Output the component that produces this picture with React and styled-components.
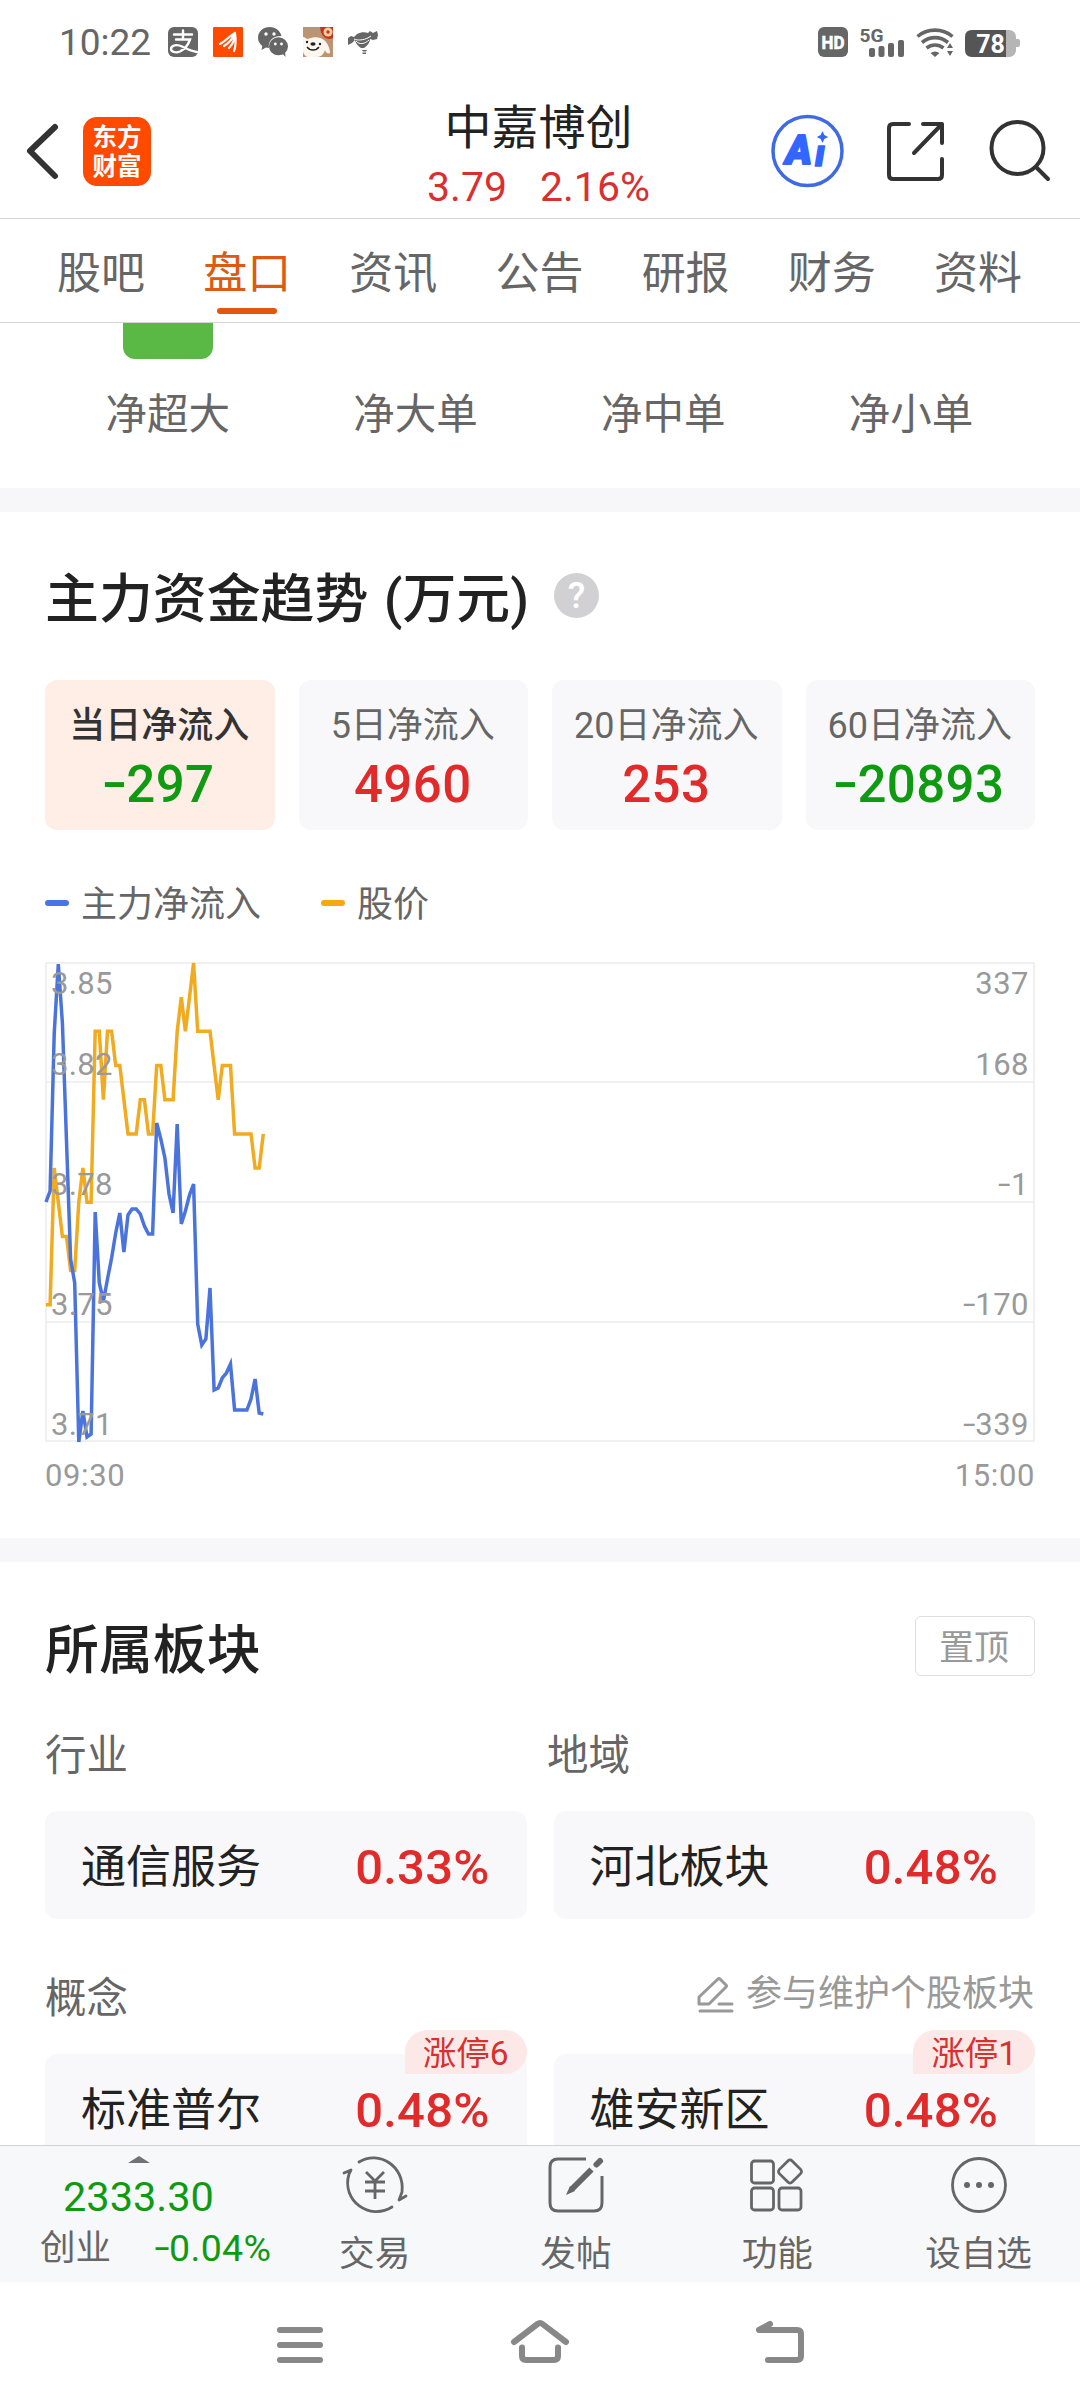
import styled, { createGlobalStyle } from 'styled-components';

const GlobalStyle = createGlobalStyle`
  * {
    box-sizing: border-box;
  }
  body {
    margin: 0;
    background: #fff;
    font-family: Roboto, 'Noto Sans CJK SC', sans-serif;
    line-height: 1;
    color: #222;
  }
  svg {
    display: block;
    flex-shrink: 0;
    overflow: visible;
  }
`;

const RED = '#e12a2a';
const GREEN = '#0f9a12';

const Screen = styled.div`
  display: flex;
  flex-direction: column;
  width: 1080px;
  height: 2408px;
  overflow: hidden;
`;

/* status bar */
const StatusBar = styled.div`
  display: flex;
  align-items: center;
  justify-content: space-between;
  height: 84px;
  padding: 0 60px 0 59px;
  color: #666;
`;
const StatusGroup = styled.div`
  display: flex;
  align-items: center;
  gap: ${props => props.$gap}px;
`;
const Clock = styled.span`
  width: 94px;
  font-size: 37px;
`;

/* header */
const Header = styled.header`
  display: grid;
  grid-template-columns: 1fr auto 1fr;
  align-items: center;
  height: 135px;
  padding: 0 28px 0 25px;
  border-bottom: 1px solid #d4d4d4;
`;
const HeaderSide = styled.div`
  display: flex;
  align-items: center;
  justify-content: ${props => (props.$right ? 'flex-end' : 'flex-start')};
`;
const Logo = styled.div`
  width: 68px;
  height: 69px;
  margin-left: 23px;
  padding-top: 6px;
  border-radius: 14px;
  background: #ff4a00;
  color: #fff;
  font-size: 24.5px;
  font-weight: 700;
  line-height: 29px;
  text-align: center;
`;
const Stock = styled.div`
  display: flex;
  flex-direction: column;
  align-items: center;
  padding-top: 12px;
`;
const StockName = styled.h1`
  margin: 0;
  font-size: 47px;
  font-weight: 400;
  line-height: 60px;
`;
const StockPrice = styled.div`
  display: flex;
  gap: 33px;
  font-size: 41px;
  line-height: 58px;
  color: #d8302f;
`;

/* tabs */
const Tabs = styled.nav`
  display: flex;
  height: 104px;
  padding: 0 29px 0 28px;
  border-bottom: 1px solid #d4d4d4;
`;
const Tab = styled.div`
  display: flex;
  flex: 1;
  flex-direction: column;
  align-items: center;
  justify-content: flex-end;
  gap: 12px;
  padding-bottom: 8px;
  font-size: 44px;
  line-height: 44px;
  color: ${props => (props.$active ? '#dc5a12' : '#666')};
  &::after {
    content: '';
    width: 60px;
    height: 6px;
    border-radius: 3px;
    background: ${props => (props.$active ? '#e2570c' : 'transparent')};
  }
`;

const Content = styled.main`
  flex: 1;
  min-height: 0;
  overflow: hidden;
`;
const Divider = styled.div`
  height: 24px;
  background: #f7f7fa;
`;

/* net order columns */
const NetOrders = styled.section`
  display: flex;
  height: 165px;
  padding: 0 45px 0 44px;
`;
const NetColumn = styled.div`
  display: flex;
  flex: 1;
  flex-direction: column;
  align-items: center;
  font-size: 41.5px;
  color: #666;
`;
const NetBar = styled.div`
  width: 90px;
  height: 36px;
  margin-bottom: 35px;
  border-radius: 0 0 12px 12px;
  background: ${props => (props.$filled ? '#5ab844' : 'transparent')};
`;

const Section = styled.section`
  padding: 0 45px;
`;
const SectionHead = styled.div`
  display: flex;
  align-items: center;
  justify-content: ${props => (props.$spread ? 'space-between' : 'flex-start')};
  height: ${props => props.$height}px;
`;
const SectionTitle = styled.h2`
  margin: 0;
  padding-top: 7px;
  font-size: 53.9px;
  font-weight: 500;
  white-space: pre;
  word-spacing: 2px;
`;
const Help = styled.span`
  width: 45px;
  height: 45px;
  margin: -2px 0 0 25px;
  border-radius: 50%;
  background: #d1d1d4;
  color: #fff;
  font-size: 36px;
  font-weight: 500;
  line-height: 46px;
  text-align: center;
`;

/* the minus of Roboto is short, figures need a wider one */
const Minus = styled.span`
  display: inline-block;
  margin: 0 0.05em 0 0.04em;
  transform: scaleX(1.45) translateY(-0.04em);
`;

/* inflow cards */
const Cards = styled.div`
  display: grid;
  grid-template-columns: repeat(4, 1fr);
  gap: 24px;
`;
const Card = styled.div`
  display: flex;
  flex-direction: column;
  align-items: center;
  height: 150px;
  padding: 28px 1px 0 0;
  border-radius: 12px;
  background: ${props => (props.$active ? '#ffeee6' : '#f8f8fa')};
`;
const CardLabel = styled.div`
  font-size: 36px;
  line-height: 36px;
  font-weight: ${props => (props.$active ? 500 : 400)};
  color: ${props => (props.$active ? '#333' : '#666')};
`;
const CardValue = styled.div`
  margin-top: 14px;
  font-size: 51px;
  font-weight: 500;
  line-height: 54px;
  letter-spacing: 0.4px;
  color: ${props => (props.$down ? GREEN : RED)};
`;

const Legend = styled.div`
  display: flex;
  gap: 60px;
  height: 132px;
  padding-top: 57px;
`;
const LegendItem = styled.div`
  display: flex;
  height: 36px;
  align-items: center;
  gap: 12px;
  font-size: 36px;
  color: #666;
  &::before {
    content: '';
    width: 24px;
    height: 6px;
    margin-top: -4px;
    border-radius: 3px;
    background: ${props => props.$color};
  }
`;

/* chart */
const ChartBox = styled.div`
  position: relative;
  height: 480px;
`;
const ChartSvg = styled.svg`
  font-size: 31px;
  letter-spacing: 0.3px;
  fill: #999;
`;
const AxisLabels = styled.div`
  position: absolute;
  top: 0;
  right: 6px;
  height: 480px;
  font-size: 31px;
  letter-spacing: 0.5px;
  text-align: right;
  color: #999;
`;
const AxisLabel = styled.div`
  height: ${props => props.$height}px;
  padding-top: 6px;
`;
const TimeAxis = styled.div`
  display: flex;
  justify-content: space-between;
  height: 96px;
  padding-top: 18px;
  font-size: 31px;
  letter-spacing: 0.6px;
  color: #999;
`;

/* boards */
const PinButton = styled.button`
  width: 120px;
  height: 60px;
  margin-top: -3px;
  padding: 5px 2px 0 0;
  border: 1px solid #dedede;
  border-radius: 6px;
  background: #fff;
  font: inherit;
  font-size: 35px;
  color: #999;
`;
const BoardGrid = styled.div`
  display: grid;
  grid-template-columns: 1fr 1fr;
  gap: 27px;
`;
const BoardHeads = styled.div`
  display: flex;
  height: 78px;
  align-items: flex-start;
  padding-top: 1px;
`;
const BoardHead = styled.div`
  flex: 0 0 502px;
  font-size: 41.5px;
  line-height: 44px;
  color: #666;
`;
const Chip = styled.div`
  position: relative;
  display: flex;
  align-items: center;
  justify-content: space-between;
  height: 108px;
  padding: 5px 37px 0 36px;
  border-radius: 12px;
  background: #f8f8fa;
  font-size: 45px;
`;
const ChipValue = styled.span`
  font-size: 49px;
  font-weight: 500;
  letter-spacing: 0.2px;
  color: ${RED};
`;
const Badge = styled.span`
  position: absolute;
  top: -24px;
  right: 0;
  height: 44px;
  padding: 0 18px;
  border-radius: 22px 22px 22px 0;
  background: #fde8e8;
  font-size: 33.5px;
  line-height: 48px;
  color: #d6302f;
`;
const ConceptHead = styled.div`
  display: flex;
  justify-content: space-between;
  height: 135px;
  padding-top: 58px;
  font-size: 41.5px;
  line-height: 44px;
  color: #666;
`;
const Maintain = styled.span`
  display: flex;
  gap: 12px;
  margin: -1px 1px 0 0;
  font-size: 36px;
  line-height: 37px;
  color: #999;
`;

/* bottom bar */
const BottomBar = styled.footer`
  display: flex;
  height: 137px;
  border-top: 1px solid #cfd3d8;
  background: #f7f8fa;
  color: #666;
`;
const IndexQuote = styled.div`
  display: flex;
  flex-direction: column;
  align-items: center;
  width: 274px;
  padding: 10px 0 0 3px;
`;
const IndexValue = styled.div`
  margin-top: 11px;
  font-size: 41.5px;
  line-height: 46px;
  color: ${GREEN};
`;
const IndexRow = styled.div`
  display: flex;
  align-items: center;
  align-self: flex-start;
  gap: 44px;
  margin: 10px 0 0 37px;
  font-size: 35.5px;
  white-space: nowrap;
`;
const IndexChange = styled.span`
  font-size: 37.5px;
  letter-spacing: 0.3px;
  color: ${GREEN};
`;
const Action = styled.div`
  display: flex;
  flex-direction: column;
  align-items: center;
  width: 201.3px;
  padding-top: 9px;
  gap: 22px;
  font-size: 35.6px;
`;

const NavBar = styled.div`
  display: flex;
  align-items: center;
  justify-content: center;
  gap: 180px;
  height: 126px;
`;

const tabs = ['股吧', '盘口', '资讯', '公告', '研报', '财务', '资料'];
const netOrders = ['净超大', '净大单', '净中单', '净小单'];
const inflows = [
  { label: '当日净流入', value: '-297' },
  { label: '5日净流入', value: '4960' },
  { label: '20日净流入', value: '253' },
  { label: '60日净流入', value: '-20893' },
];
const concepts = [
  { name: '标准普尔', change: '0.48%', badge: '涨停6' },
  { name: '雄安新区', change: '0.48%', badge: '涨停1' },
];

// one entry per minute from 09:30, price is in ticks below the day high
const price = [
  10, 10, 6, 7, 8, 8, 9, 9, 7, 6, 7, 7, 2, 2, 4, 2, 2, 3, 3, 4, 5, 5, 5, 4, 4, 5, 5, 3, 3, 4, 4, 4, 2, 1, 2, 1, 0, 2,
  2, 2, 2, 3, 4, 3, 3, 3, 5, 5, 5, 5, 5, 6, 6, 5,
];
const inflow = [
  239, 228, 71, 1, 60, 178, 296, 320, 479, 448, 474, 471, 249, 320, 338, 316, 295, 270, 250, 289, 252, 246, 246, 251,
  263, 271, 271, 160, 176, 195, 231, 250, 161, 261, 248, 232, 221, 361, 382, 376, 325, 427, 425, 415, 410, 401, 447,
  447, 447, 447, 436, 416, 450, 451,
];
const toPoints = (list, scale) => list.map((v, i) => `${(1 + i * 4.1).toFixed(1)},${(1 + v * scale).toFixed(1)}`).join(' ');

const gridLines = [1, 120, 240, 360, 479];
const labelY = [32, 113, 233, 353, 473];
const leftLabels = ['3.85', '3.82', '3.78', '3.75', '3.71'];
const rightLabels = ['337', '168', '-1', '-170', '-339'];

function Figure({ children }) {
  if (!children.startsWith('-')) return children;
  return (
    <span>
      <Minus>-</Minus>
      {children.slice(1)}
    </span>
  );
}

function TrendChart() {
  return (
    <ChartBox>
      <ChartSvg width="990" height="480" viewBox="0 0 990 480">
        <g stroke="#f0f0f0" strokeWidth="2">
          {gridLines.map(y => (
            <line key={y} x1="0" x2="990" y1={y} y2={y} />
          ))}
          <line x1="1" x2="1" y1="0" y2="480" />
          <line x1="989" x2="989" y1="0" y2="480" />
        </g>
        <polyline points={toPoints(price, 34.17)} fill="none" stroke="#f0ab20" strokeWidth="3.5" />
        <polyline points={toPoints(inflow, 1)} fill="none" stroke="#4a74dc" strokeWidth="3.5" />
        {leftLabels.map((label, i) => (
          <text key={label} x="6" y={labelY[i]}>
            {label}
          </text>
        ))}
      </ChartSvg>
      <AxisLabels>
        {rightLabels.map((label, i) => (
          <AxisLabel key={label} $height={i === 0 ? 81 : 120}>
            <Figure>{label}</Figure>
          </AxisLabel>
        ))}
      </AxisLabels>
    </ChartBox>
  );
}

function StatusIcons() {
  return (
    <>
      <svg width="30" height="30" viewBox="0 0 30 30">
        <rect width="30" height="30" rx="6" fill="#666" />
        <g fill="none" stroke="#fff" strokeWidth="2.4" strokeLinecap="round">
          <path d="M6 7.5h18M15 3.5v9M8 12.5h14c-2 6-6 10-10 12-5 2-9 0-9-2.500 0-4 6-5 11-2.500 6 3 10 5 15 5.500" />
        </g>
      </svg>
      <svg width="30" height="30" viewBox="0 0 30 30">
        <rect width="30" height="30" rx="1" fill="#ff4a00" />
        <path
          d="M7 17C13 14 16 9 22 6M11 19c5-3 9-8 11-13M16 21c4-4 6-9 6-15M21 24c2-5 2-11 1-18"
          fill="none"
          stroke="#fff"
          strokeWidth="2.2"
          strokeLinecap="round"
        />
      </svg>
      <svg width="30" height="30" viewBox="0 0 30 30">
        <path d="M12 0C5 0 0 4.700 0 10.700c0 3.300 1.600 6.200 4.300 8.200L3.500 23l4.500-2.500 3 .6c-1.500-6.600 4-12.400 12.500-12C22 3.500 17.500 0 12 0z" fill="#666" />
        <ellipse cx="20.500" cy="19.300" rx="9.500" ry="9" fill="#666" />
        <path d="M24 26l3.500 4-.5-5.500z" fill="#666" />
        <g fill="#fff">
          <circle cx="8" cy="7" r="1.700" />
          <circle cx="16" cy="7" r="1.700" />
          <circle cx="17.300" cy="17" r="1.400" />
          <circle cx="23.500" cy="17" r="1.400" />
        </g>
      </svg>
      <svg width="30" height="30" viewBox="0 0 30 30">
        <rect width="30" height="30" fill="#bd9472" />
        <path d="M17 0h13v11c-6 3-12-1-13-11z" fill="#c8321f" />
        <circle cx="25" cy="5" r="4.500" fill="#f6cf9c" />
        <circle cx="25" cy="5" r="1.700" fill="#c8321f" />
        <path d="M0 10c2 0 3 2 5 2 6-3 13-2 16 1 3 2 6 8 6 13-2 1-4 0-5-3-2 6-5 7-9 7H4c-3-2-4-4-4-6z" fill="#fdf6ee" />
        <path d="M4 20c3 4 9 4 12 0" fill="none" stroke="#222" strokeWidth="1.300" />
        <ellipse cx="10" cy="17" rx="2.600" ry="1.800" fill="#222" />
        <circle cx="4" cy="15" r="1.200" fill="#222" />
        <circle cx="17" cy="17" r="1.200" fill="#222" />
      </svg>
      <svg width="30" height="30" viewBox="0 0 30 30" fill="#666">
        <path d="M0 11l3-2 3 1 3-3c4-2 8-2 11-1l2-2 3 2 4-2 1 4-1 4-4 1-3-1c0 4-3 7-6 9h-3c-3-2-5-4-6-8l-3 3-4 2z" />
        <path d="M6 12c4 2 12 1 17-3M8 14c3 4 9 3 13-1" stroke="#fff" fill="none" />
        <path d="M14 23h5l-1 1.500h-3zM14.500 25.500h3.500v1.500h-3.500z" />
      </svg>
    </>
  );
}

const StatusText = styled.text`
  font-family: Roboto, sans-serif;
  font-weight: 700;
`;

function SignalIcons() {
  return (
    <svg width="202" height="30" viewBox="0 0 202 30" fill="#666">
      <rect width="30" height="30" rx="6" />
      <StatusText
        x="3.500"
        y="22"
        fontSize="19"
        fill="#fff"
        stroke="#fff"
        strokeWidth="0.6"
        textLength="23"
        lengthAdjust="spacingAndGlyphs"
      >
        HD
      </StatusText>
      <StatusText x="41.500" y="14.500" fontSize="19" textLength="24" lengthAdjust="spacingAndGlyphs">
        5G
      </StatusText>
      <rect x="51" y="21" width="6" height="9" rx="2" />
      <rect x="60.500" y="19" width="6" height="11" rx="2" />
      <rect x="70" y="16" width="6" height="14" rx="2" />
      <rect x="80" y="13" width="6" height="17" rx="2" />
      <g fill="none" stroke="#666" strokeWidth="3.600">
        <path d="M99.500 9.500c10-8.500 25-8.500 35 0" />
        <path d="M104 15.500c8-6.500 18-6.500 26 0" />
        <path d="M108.500 21c5-4 12-4 17 0" />
      </g>
      <path d="M112.500 26c3-2 6-2 9 0l-4.500 4z" />
      <path d="M129 21l3-5 3 5zM129 24l3 5 3-5z" />
      <path d="M188 3h3c4 0 7 3 7 7v2h2q2 0 2 2v4q0 2-2 2h-2v3c0 4-3 7-7 7h-3z" fill="#b5b5b5" />
      <path d="M154 3h34v27h-34q-7 0-7-7V10q0-7 7-7z" fill="#555" />
      <StatusText x="172.500" y="25.500" fontSize="25" fill="#fff" textAnchor="middle">
        78
      </StatusText>
    </svg>
  );
}

const line = { fill: 'none', strokeLinecap: 'round', strokeLinejoin: 'round' };

const BackIcon = () => (
  <svg width="35" height="60" viewBox="0 0 35 60" {...line} stroke="#333" strokeWidth="6">
    <path d="M30 6L5 30l25 25" />
  </svg>
);

const HeaderIcons = () => (
  <svg width="282" height="76" viewBox="1 0 282 76" {...line} stroke="#333" strokeWidth="4">
    <circle cx="38.500" cy="38" r="34.500" stroke="#4069e6" strokeWidth="3.500" />
    <g fill="#3366ff" stroke="none">
      <path d="M53.500 18l1.800 4 3.900 2-3.900 2-1.800 4-1.800-4-3.900-2 3.900-2z" />
      <text x="16.500" y="51" fontSize="40" fontWeight="900" fontStyle="italic" stroke="#3366ff" strokeWidth="2">
        A
      </text>
      <text x="46" y="53" fontSize="36" fontWeight="900" fontStyle="italic" stroke="#3366ff" strokeWidth="1.500">
        ı
      </text>
    </g>
    <path d="M140 11h-16q-4 0-4 4v47q0 4 4 4h45q4 0 4-4V46M154 11h19v19M173 11l-28 29" />
    <circle cx="248.500" cy="35" r="26" />
    <path d="M267 54l12 12" />
  </svg>
);

const EditIcon = () => (
  <svg width="37" height="37" viewBox="0 0 37 37" {...line} stroke="#999" strokeWidth="3">
    <path d="M2 28v-7L21 3q1-1 2 0l6 6q1 1 0 2L12 28zM22 28h13M3 35h32" />
  </svg>
);

const TradeIcon = () => (
  <svg width="66" height="60" viewBox="0 0 66 60" {...line} stroke="#666" strokeWidth="2.800">
    <path d="M17 7C37-5 63 11 60 37l-3 8 7-4M50 52C28 66-1 46 7 19l2-4-7 3" />
    <path d="M24 17l9 9 9-9M33 26v18M23 27h20M23 36h20" strokeLinecap="butt" />
  </svg>
);

const PostIcon = () => (
  <svg width="60" height="60" viewBox="0 0 60 60" {...line} stroke="#666" strokeWidth="3">
    <path d="M40 4H12q-8 0-8 8v36q0 8 8 8h36q8 0 8-8V21" strokeLinecap="butt" />
    <path d="M45.500 14.500L26 34" strokeWidth="6" strokeLinecap="butt" />
    <path d="M24 31l5 5-9 4z" fill="#666" stroke="none" />
    <path d="M50.500 9.500L54 6" strokeWidth="6" />
  </svg>
);

const FunctionIcon = () => (
  <svg width="60" height="60" viewBox="0 0 60 60" {...line} stroke="#666" strokeWidth="2.800">
    <rect x="4.500" y="6" width="22" height="22" rx="3" />
    <rect x="4.500" y="33" width="22" height="22" rx="3" />
    <rect x="32" y="33" width="22" height="22" rx="3" />
    <rect x="34" y="7.500" width="18" height="18" rx="3" transform="rotate(45 43 16.500)" />
  </svg>
);

const MoreIcon = () => (
  <svg width="60" height="60" viewBox="0 0 60 60">
    <circle cx="30" cy="30" r="26.500" fill="none" stroke="#666" strokeWidth="2.800" />
    <g fill="#666">
      <circle cx="18" cy="30" r="3" />
      <circle cx="30" cy="30" r="3" />
      <circle cx="42" cy="30" r="3" />
    </g>
  </svg>
);

const actions = [
  { label: '交易', Icon: TradeIcon },
  { label: '发帖', Icon: PostIcon },
  { label: '功能', Icon: FunctionIcon },
  { label: '设自选', Icon: MoreIcon },
];

function SystemNav() {
  return (
    <NavBar>
      <svg width="60" height="60" viewBox="0 0 60 60" {...line} stroke="#888" strokeWidth="6">
        <path d="M10 15h40M10 30h40M10 45h40" />
      </svg>
      <svg width="60" height="60" viewBox="0 0 60 60" {...line} stroke="#888" strokeWidth="6">
        <path d="M4 27L27.500 9q2.500-2 5 0L56 27M12 32.500V41q0 4 4 4h28q4 0 4-4v-8.500" />
      </svg>
      <svg width="60" height="60" viewBox="0 0 60 60" {...line} stroke="#888" strokeWidth="6">
        <path d="M20 9L9 15h38q4 0 4 4v22q0 4-4 4H18" />
      </svg>
    </NavBar>
  );
}

export default function App() {
  return (
    <Screen>
      <GlobalStyle />
      <StatusBar>
        <StatusGroup $gap={15}>
          <Clock>10:22</Clock>
          <StatusIcons />
        </StatusGroup>
        <SignalIcons />
      </StatusBar>
      <Header>
        <HeaderSide>
          <BackIcon />
          <Logo>
            东方
            <br />
            财富
          </Logo>
        </HeaderSide>
        <Stock>
          <StockName>中嘉博创</StockName>
          <StockPrice>
            <span>3.79</span>
            <span>2.16%</span>
          </StockPrice>
        </Stock>
        <HeaderSide $right>
          <HeaderIcons />
        </HeaderSide>
      </Header>
      <Tabs>
        {tabs.map(tab => (
          <Tab key={tab} $active={tab === '盘口'}>
            {tab}
          </Tab>
        ))}
      </Tabs>
      <Content>
        <NetOrders>
          {netOrders.map((name, i) => (
            <NetColumn key={name}>
              <NetBar $filled={i === 0} />
              {name}
            </NetColumn>
          ))}
        </NetOrders>
        <Divider />
        <Section>
          <SectionHead $height={168}>
            <SectionTitle>主力资金趋势 (万元)</SectionTitle>
            <Help>?</Help>
          </SectionHead>
          <Cards>
            {inflows.map(({ label, value }, i) => (
              <Card key={label} $active={i === 0}>
                <CardLabel $active={i === 0}>{label}</CardLabel>
                <CardValue $down={value.startsWith('-')}>
                  <Figure>{value}</Figure>
                </CardValue>
              </Card>
            ))}
          </Cards>
          <Legend>
            <LegendItem $color="#4a74e6">主力净流入</LegendItem>
            <LegendItem $color="#f5a811">股价</LegendItem>
          </Legend>
          <TrendChart />
          <TimeAxis>
            <span>09:30</span>
            <span>15:00</span>
          </TimeAxis>
        </Section>
        <Divider />
        <Section>
          <SectionHead $spread $height={171}>
            <SectionTitle>所属板块</SectionTitle>
            <PinButton>置顶</PinButton>
          </SectionHead>
          <BoardHeads>
            <BoardHead>行业</BoardHead>
            <BoardHead>地域</BoardHead>
          </BoardHeads>
          <BoardGrid>
            <Chip>
              通信服务
              <ChipValue>0.33%</ChipValue>
            </Chip>
            <Chip>
              河北板块
              <ChipValue>0.48%</ChipValue>
            </Chip>
          </BoardGrid>
          <ConceptHead>
            概念
            <Maintain>
              <EditIcon />
              参与维护个股板块
            </Maintain>
          </ConceptHead>
          <BoardGrid>
            {concepts.map(({ name, change, badge }) => (
              <Chip key={name}>
                {name}
                <ChipValue>{change}</ChipValue>
                <Badge>{badge}</Badge>
              </Chip>
            ))}
          </BoardGrid>
        </Section>
      </Content>
      <BottomBar>
        <IndexQuote>
          <svg width="22" height="7" viewBox="0 0 22 7">
            <path d="M0 7L11 0l11 7z" fill="#707276" />
          </svg>
          <IndexValue>2333.30</IndexValue>
          <IndexRow>
            创业
            <IndexChange>
              <Figure>-0.04%</Figure>
            </IndexChange>
          </IndexRow>
        </IndexQuote>
        {actions.map(({ label, Icon }) => (
          <Action key={label}>
            <Icon />
            {label}
          </Action>
        ))}
      </BottomBar>
      <SystemNav />
    </Screen>
  );
}
